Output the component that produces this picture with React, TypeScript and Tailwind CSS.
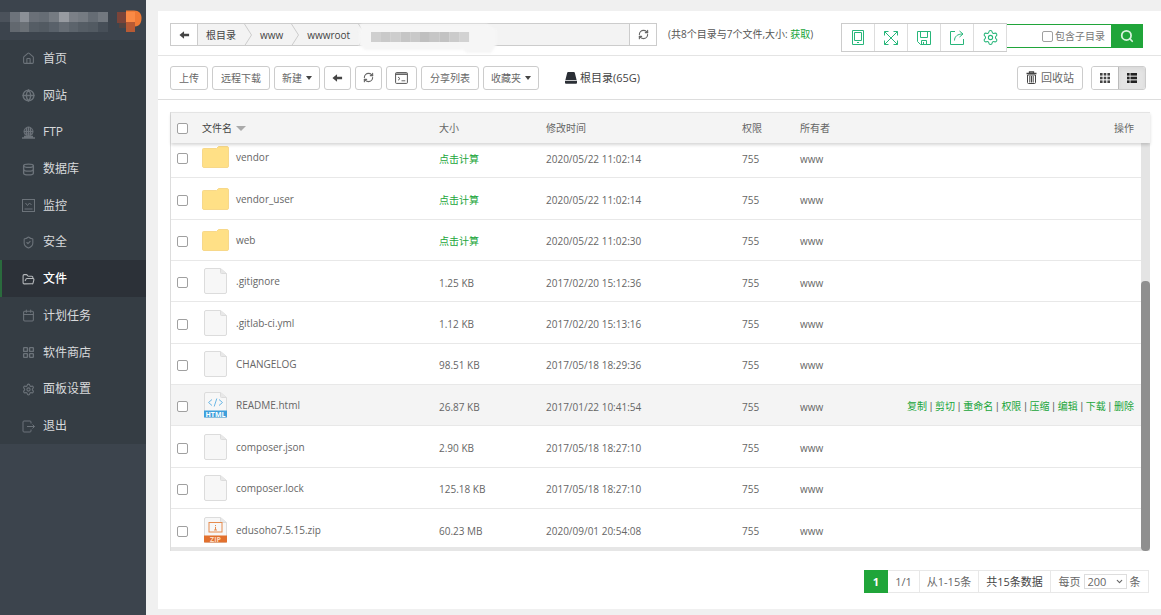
import type { ReactNode } from 'react';
import {
  Calendar,
  ChevronDown,
  Database,
  FolderOpen,
  Globe,
  House,
  LayoutGrid,
  RefreshCw,
  Search,
  Settings,
  ShieldCheck,
} from 'lucide-react';

type FileKind = 'folder' | 'file' | 'html' | 'zip';

interface FileRow {
  name: string;
  kind: FileKind;
  size: string | null;
  mtime: string;
  active?: boolean;
}

const files: FileRow[] = [
  { name: 'vendor', kind: 'folder', size: null, mtime: '2020/05/22 11:02:14' },
  { name: 'vendor_user', kind: 'folder', size: null, mtime: '2020/05/22 11:02:14' },
  { name: 'web', kind: 'folder', size: null, mtime: '2020/05/22 11:02:30' },
  { name: '.gitignore', kind: 'file', size: '1.25 KB', mtime: '2017/02/20 15:12:36' },
  { name: '.gitlab-ci.yml', kind: 'file', size: '1.12 KB', mtime: '2017/02/20 15:13:16' },
  { name: 'CHANGELOG', kind: 'file', size: '98.51 KB', mtime: '2017/05/18 18:29:36' },
  { name: 'README.html', kind: 'html', size: '26.87 KB', mtime: '2017/01/22 10:41:54', active: true },
  { name: 'composer.json', kind: 'file', size: '2.90 KB', mtime: '2017/05/18 18:27:10' },
  { name: 'composer.lock', kind: 'file', size: '125.18 KB', mtime: '2017/05/18 18:27:10' },
  { name: 'edusoho7.5.15.zip', kind: 'zip', size: '60.23 MB', mtime: '2020/09/01 20:54:08' },
];

const actions = ['复制', '剪切', '重命名', '权限', '压缩', '编辑', '下载', '删除'];

const iconClass = 'h-[13px] w-[13px]';

const menu: { label: string; icon: ReactNode; active?: boolean }[] = [
  { label: '首页', icon: <House className={iconClass} strokeWidth={2} /> },
  { label: '网站', icon: <Globe className={iconClass} strokeWidth={2.5} /> },
  { label: 'FTP', icon: <FtpIcon /> },
  { label: '数据库', icon: <Database className={iconClass} strokeWidth={2.5} /> },
  { label: '监控', icon: <MonitorIcon /> },
  { label: '安全', icon: <ShieldCheck className={iconClass} strokeWidth={2} /> },
  { label: '文件', icon: <FolderOpen className={iconClass} strokeWidth={2} />, active: true },
  { label: '计划任务', icon: <Calendar className={iconClass} strokeWidth={2} /> },
  { label: '软件商店', icon: <LayoutGrid className={iconClass} strokeWidth={2.5} /> },
  { label: '面板设置', icon: <Settings className={iconClass} strokeWidth={2} /> },
  { label: '退出', icon: <ExitIcon /> },
];

function FtpIcon() {
  return (
    <svg viewBox="0 0 13 13" className={iconClass} fill="none" stroke="currentColor">
      <circle cx="6.5" cy="5.5" r="4.5" fill="currentColor" fillOpacity=".35" />
      <path d="M2 5.5h9M6.5 1v9M4.5 2v7M8.5 2v7M2.5 8h8" />
      <path d="M0 12h13M2 10.5h9" strokeWidth="1.4" />
    </svg>
  );
}

function MonitorIcon() {
  return (
    <svg viewBox="0 0 13 13" className={iconClass} fill="none" stroke="currentColor">
      <rect x=".5" y=".5" width="12" height="12" />
      <path d="M2.5 10h8M3.5 4l2 2.5 2-2.5 2 2" />
    </svg>
  );
}

function ExitIcon() {
  return (
    <svg viewBox="0 0 13 13" className={iconClass} fill="none" stroke="currentColor">
      <path d="M9 3.5V2a1 1 0 0 0-1-1H2a1 1 0 0 0-1 1v9a1 1 0 0 0 1 1h6a1 1 0 0 0 1-1V9.500M5 6.500h7.500M10.500 4.500l2 2-2 2" />
    </svg>
  );
}

function BackArrow() {
  return (
    <svg viewBox="0 0 12 10" className="h-[10px] w-[11px]" fill="#444">
      <path d="M.5 5 5.500 1v2.600H11v2.800H5.500V9z" />
    </svg>
  );
}

function TerminalIcon() {
  return (
    <svg viewBox="0 0 13 12" className="h-3 w-[13px]" fill="none" stroke="#555">
      <rect x=".6" y=".6" width="11.8" height="10.8" rx=".8" />
      <path d="M.6 2.2h11.8" strokeWidth="1.4" />
      <path d="m3 5 2 1.6L3 8.3M6.5 8.8h3.8" strokeWidth=".9" />
    </svg>
  );
}

function DiskIcon() {
  return (
    <svg viewBox="0 0 12 12" className="h-3 w-3" fill="#2b2f36">
      <path d="M3.2 0h5.6a1 1 0 0 1 1 .8L11.6 8H.4L2.2.8a1 1 0 0 1 1-.8z" />
      <path d="M0 8.8h12v2a1 1 0 0 1-1 1H1a1 1 0 0 1-1-1z" />
    </svg>
  );
}

function TrashIcon() {
  return (
    <svg viewBox="0 0 11 13" className="h-[13px] w-[11px]" fill="none" stroke="#444">
      <path d="M.5 2.500h10M3.500 2V.8h4V2" strokeWidth="1.3" />
      <path d="M1.500 4h8v7.500a1 1 0 0 1-1 1h-6a1 1 0 0 1-1-1zM3.800 5v6.500M5.500 5v6.500M7.200 5v6.500" />
    </svg>
  );
}

function Caret() {
  return <span className="ml-1 border-x-[3px] border-t-[4px] border-x-transparent border-t-[#444]" />;
}

function GridIcon() {
  return (
    <svg viewBox="0 0 10 10" className="h-[10px] w-[10px]" fill="#444">
      {[0, 3.7, 7.4].map((y) =>
        [0, 3.7, 7.4].map((x) => <rect key={`${x}-${y}`} x={x} y={y} width="2.6" height="2.6" />)
      )}
    </svg>
  );
}

function ListIcon() {
  return (
    <svg viewBox="0 0 10 10" className="h-[10px] w-[10px]" fill="#222">
      {[0, 3.7, 7.4].map((y) => (
        <g key={y}>
          <rect x="0" y={y} width="2.6" height="2.6" />
          <rect x="3.5" y={y} width="6.5" height="2.6" />
        </g>
      ))}
    </svg>
  );
}

function FileIcon({ kind }: { kind: FileKind }) {
  if (kind === 'folder') {
    return (
      <svg viewBox="0 0 27 22" className="h-[22px] w-[27px]">
        <path
          d="M1.5 2.5h13l2-2h8.5a1.5 1.5 0 0 1 1.5 1.5v18a1.5 1.5 0 0 1-1.5 1.5H2A1.5 1.5 0 0 1 .5 20V3.5a1 1 0 0 1 1-1z"
          fill="#ffe086"
          stroke="#f7d88a"
        />
      </svg>
    );
  }
  return (
    <svg viewBox="0 0 23 26" className="mx-[2px] h-[26px] w-[23px]">
      <path
        d="M2 .5h14.5l6 5V24a1.5 1.5 0 0 1-1.5 1.5H2A1.5 1.5 0 0 1 .5 24V2A1.5 1.5 0 0 1 2 .5z"
        fill="#f7f7f7"
        stroke="#dcdcdc"
      />
      <path d="M16.5.5v4a1 1 0 0 0 1 1h5" fill="#e8e8e8" stroke="#dcdcdc" />
      {kind === 'html' && (
        <>
          <path d="m8 7.5-3.5 3L8 13.5M15 7.5l3.5 3-3.5 3M12.8 6.5l-2.6 8" fill="none" stroke="#6bb8e6" />
          <rect x="0" y="18.5" width="23" height="7" fill="#3d9fdb" />
          <text x="11.5" y="24.8" textAnchor="middle" fontSize="7" fontWeight="700" fill="#fff">HTML</text>
        </>
      )}
      {kind === 'zip' && (
        <>
          <rect x="5" y="5.5" width="13" height="9.5" fill="none" stroke="#e58b4e" />
          <path d="M11.5 8v1.2M11.5 10v3M10 13h3" fill="none" stroke="#e58b4e" />
          <rect x="0" y="18.5" width="23" height="7" fill="#e2702d" />
          <text x="11.5" y="24.8" textAnchor="middle" fontSize="7" fontWeight="700" fill="#fbd9c0">ZIP</text>
        </>
      )}
    </svg>
  );
}

function Checkbox({ label }: { label: string }) {
  return (
    <input
      type="checkbox"
      aria-label={label}
      className="block h-[11px] w-[11px] appearance-none rounded-[2px] border border-[#a0a0a0] bg-white checked:bg-[#20a53a]"
    />
  );
}

function ToolButton({ children, label, className = 'px-2' }: { children: ReactNode; label?: string; className?: string }) {
  return (
    <button
      aria-label={label}
      className={`flex h-6 items-center justify-center rounded-[3px] border border-[#ccc] bg-white text-[10px] text-[#666] ${className}`}
    >
      {children}
    </button>
  );
}

function Columns() {
  return (
    <colgroup>
      <col className="w-[31px]" />
      <col className="w-[237px]" />
      <col className="w-[107px]" />
      <col className="w-[196px]" />
      <col className="w-[58px]" />
      <col className="w-[60px]" />
      <col />
    </colgroup>
  );
}

function Logo() {
  const top = ['#4b525b', '#6d737b', '#8b9097', '#6a7078', '#666d75', '#757b82', '#979ba1', '#7b8087', '#757b82', '#656c74', '#72787f'];
  const bottom = ['#3c444d', '#62686f', '#6a7076', '#555d65', '#525a62', '#59616a', '#656c74', '#5c646c', '#555d65', '#525a62', '#474f58'];
  return (
    <svg viewBox="0 0 146 40" className="h-10 w-[146px]" shapeRendering="crispEdges">
      {top.map((c, i) => (
        <rect key={i} x={i * 9.8} y="12" width="9.8" height="10" fill={c} />
      ))}
      {bottom.map((c, i) => (
        <rect key={i} x={i * 9.8} y="22" width="9.8" height="10" fill={c} />
      ))}
      <path d="M126 10.5h8c5 0 7.5 3 7.5 7.5s-2 8.5-6.5 8.5h-9z" fill="#f07a35" shapeRendering="auto" />
      <rect x="117" y="12" width="9" height="11" fill="#7b4439" />
      <rect x="119" y="23" width="7" height="5" fill="#54433f" />
      <rect x="126" y="12" width="9" height="10" fill="#fb8a45" />
      <rect x="126" y="22" width="9" height="10" fill="#b75a34" />
    </svg>
  );
}

function Sidebar() {
  return (
    <aside className="w-[146px] shrink-0 bg-[#3c444d]">
      <Logo />
      <nav className="grid h-[404px] auto-rows-fr bg-[#353d44]">
        {menu.map((item) => (
          <a
            key={item.label}
            href="#"
            className={`flex items-center gap-2 border-l-2 pt-px pl-5 text-[12px] ${
              item.active
                ? 'border-[#2a6b3d] bg-[#2c3138] font-medium text-white'
                : 'border-transparent text-[#d8dadc]'
            }`}
          >
            <span className={item.active ? 'text-[#b5b8bb]' : 'text-[#6c737a]'}>{item.icon}</span>
            {item.label}
          </a>
        ))}
      </nav>
    </aside>
  );
}

function Crumb({ children }: { children: ReactNode }) {
  return (
    <>
      <a href="#" className="px-2 text-[#444]">{children}</a>
      <svg viewBox="0 0 8 22" className="h-[22px] w-2" fill="none" stroke="#ccc">
        <path d="m.5 0 7 11-7 11" />
      </svg>
    </>
  );
}

function PathBar() {
  return (
    <div className="relative flex h-[23px] w-[487px] border border-[#ccc] bg-[#f3f3f3] text-[10px]">
      <button aria-label="返回" className="flex w-[27px] items-center justify-center border-r border-[#ccc] bg-white">
        <BackArrow />
      </button>
      <div className="flex flex-1 items-center">
        <Crumb>根目录</Crumb>
        <Crumb>www</Crumb>
        <Crumb>wwwroot</Crumb>
      </div>
      <button aria-label="刷新" className="flex w-[27px] items-center justify-center border-l border-[#ccc] bg-white">
        <RefreshCw className="h-[11px] w-[11px] text-[#666]" strokeWidth={2.5} />
      </button>
      {/* redacted directory name */}
      <svg viewBox="0 0 142 36" className="absolute -top-1 left-[186px] h-9 w-[142px]">
        <path d="M4 4h126l10 6v14l-6 9h-24l-4-3H8l-6-5V15z" fill="#f6f6f6" className="blur-[1px]" />
        {['#cfcfcf', '#c9c9c9', '#cdcdcd', '#c5c5c5', '#c9c9c9', '#bfbfbf', '#c6c6c6', '#c2c2c2', '#cbcbcb', '#d2d2d2'].map((c, i) => (
          <rect key={i} x={14 + i * 9.8} y="12" width="9.9" height="10" fill={c} />
        ))}
      </svg>
    </div>
  );
}

function CaptureTools() {
  const cell = 'flex w-[33px] items-center justify-center border-r border-[#ddd]';
  const svg = 'h-4 w-4';
  return (
    <div className="flex h-[29px] border border-r-0 border-[#ccc] bg-white">
      <button aria-label="设备" className={cell}>
        <svg viewBox="0 0 16 16" className={svg} fill="none" stroke="#27b67a">
          <path d="M2.5.5h11v14h-11zM4.5 2.500h7v8h-7zM7 12.500h2" />
        </svg>
      </button>
      <button aria-label="全屏" className={cell}>
        <svg viewBox="0 0 16 16" className={svg} fill="none" stroke="#27b67a">
          <path d="m1.5 1.5 13 13M14.5 1.5l-13 13M1.5 5.5v-4h4M10.5 1.5h4v4M14.5 10.5v4h-4M5.5 14.5h-4v-4" />
        </svg>
      </button>
      <button aria-label="保存" className={cell}>
        <svg viewBox="0 0 16 16" className={svg} fill="none" stroke="#27b67a">
          <path d="M1.5 1.5h13v13H4.500l-3-3zM4.500 1.500v6h7v-6M5.500 14.500v-4h5v4M7.500 12v2.500" />
        </svg>
      </button>
      <button aria-label="分享" className={cell}>
        <svg viewBox="0 0 16 16" className={svg} fill="none" stroke="#27b67a">
          <path d="M6 1.5H1.5v13h13V9M5.500 10.500c0-4 3-6.500 8-6.500M10.500 1l3.500 3-3.500 3" />
        </svg>
      </button>
      <button aria-label="设置" className={cell}>
        <Settings className="h-[17px] w-[17px] text-[#27b67a]" strokeWidth={1.5} />
      </button>
    </div>
  );
}

function FileTable() {
  return (
    <div className="mt-3 mr-[11px] mb-[19px] ml-3 border-l border-[#ddd] text-[10px] text-[#666]">
      <div className="relative z-10 border-t border-[#e4e4e4] bg-[#f4f4f4] pr-[9px] shadow-[0_2px_3px_rgba(0,0,0,0.16)]">
        <table className="w-full table-fixed">
          <Columns />
          <thead>
            <tr className="h-[30px] text-left text-[#666] [&>th]:font-normal">
              <th className="pl-[6px]"><Checkbox label="全选" /></th>
              <th>
                <span className="flex items-center gap-1 text-[#444]">
                  文件名
                  <span className="border-x-[5px] border-t-[5px] border-x-transparent border-t-[#aaa]" />
                </span>
              </th>
              <th>大小</th>
              <th>修改时间</th>
              <th>权限</th>
              <th>所有者</th>
              <th className="pr-[7px] text-right">操作</th>
            </tr>
          </thead>
        </table>
      </div>
      <div className="flex h-[404px] overflow-hidden">
        <div className="min-w-0 flex-1">
          <table className="-mt-[7px] h-[414px] w-full table-fixed">
            <Columns />
            <tbody>
              {files.map((file) => (
                <tr key={file.name} className={`h-[41px] border-t border-[#e8e8e8] ${file.active ? 'bg-[#f4f4f4]' : ''}`}>
                  <td className="pt-[3px] pl-[6px]"><Checkbox label={file.name} /></td>
                  <td>
                    <span className="flex h-[26px] items-center gap-[7px]">
                      <FileIcon kind={file.kind} />
                      {file.name}
                    </span>
                  </td>
                  <td className="pt-[3px]">{file.size ?? <a href="#" className="text-[#20a53a]">点击计算</a>}</td>
                  <td className="pt-[3px]">{file.mtime}</td>
                  <td className="pt-[3px]">755</td>
                  <td className="pt-[3px]">www</td>
                  <td className="pt-[3px] pr-[7px] text-right font-['Liberation_Sans','Noto_Sans_CJK_SC',sans-serif] whitespace-nowrap">
                    {file.active &&
                      actions.map((action, i) => (
                        <span key={action}>
                          {i > 0 && ' | '}
                          <a href="#" className="text-[#20a53a]">{action}</a>
                        </span>
                      ))}
                  </td>
                </tr>
              ))}
            </tbody>
          </table>
        </div>
        <div className="flex w-[9px] flex-col justify-end bg-[#e4e4e4]">
          <div className="h-[266px] rounded-t-[4px] bg-[#8f8f8f]" />
        </div>
      </div>
      <div className="flex h-[4px] justify-end bg-[#e6e6e6]">
        <div className="w-[9px] rounded-b-[4px] bg-[#8f8f8f]" />
      </div>
    </div>
  );
}

function Pagination() {
  return (
    <div className="mx-3 flex justify-end text-[11px] text-[#666]">
      <span className="flex h-[23px] w-6 items-center justify-center bg-[#20a53a] font-bold text-white">1</span>
      <div className="flex h-[23px] divide-x divide-[#e8e8e8] border border-l-0 border-[#e8e8e8]">
        <span className="flex w-8 items-center justify-center">1/1</span>
        <span className="flex w-[59px] items-center justify-center">从1-15条</span>
        <span className="flex w-[72px] items-center justify-center text-[#444]">共15条数据</span>
        <label className="flex w-[97px] items-center justify-center gap-[3px]">
          每页
          <span className="relative flex items-center">
            <select className="h-[15px] w-[43px] appearance-none border border-[#ddd] bg-white pl-[3px] text-[11px] leading-none">
              <option>200</option>
            </select>
            <ChevronDown className="pointer-events-none absolute right-[3px] h-[9px] w-[9px]" strokeWidth={3} />
          </span>
          条
        </label>
      </div>
    </div>
  );
}

export default function App() {
  return (
    <div
      lang="zh-CN"
      className="flex min-h-screen bg-[#f0f0f0] font-['Open_Sans','Noto_Sans_CJK_SC',sans-serif] leading-none"
    >
      <Sidebar />
      <main className="mt-[11px] mb-[6px] ml-3 min-w-0 flex-1 bg-white">
        <div className="flex h-[45px] items-start border-b border-[#e4e4e4] pt-3 pr-[18px] pl-3">
          <PathBar />
          <p className="ml-[11px] flex h-[21px] items-center text-[10px] whitespace-nowrap text-[#555]">
            (共8个目录与7个文件,大小:&nbsp;<a href="#" className="text-[#20a53a]">获取</a>)
          </p>
          <div className="ml-auto flex items-start">
            <CaptureTools />
            <form className="mt-px flex h-6 border-y border-[#20a53a]">
              <input aria-label="搜索文件" className="w-[35px] outline-none" />
              <label className="flex w-[69px] items-center gap-[2px] text-[10px] text-[#777]">
                <Checkbox label="包含子目录" />
                包含子目录
              </label>
              <button type="button" aria-label="搜索" className="flex w-8 items-center justify-center bg-[#20a53a]">
                <Search className="h-[14px] w-[14px] text-[#d9f3de]" strokeWidth={3} />
              </button>
            </form>
          </div>
        </div>

        <div className="flex h-11 items-center gap-1 border-b border-[#ddd] pr-[15px] pl-3">
          <ToolButton>上传</ToolButton>
          <ToolButton>远程下载</ToolButton>
          <ToolButton className="px-[7px]">新建<Caret /></ToolButton>
          <ToolButton label="后退" className="px-[7px]"><BackArrow /></ToolButton>
          <ToolButton label="刷新列表" className="px-[7px]">
            <RefreshCw className="h-[11px] w-[11px]" strokeWidth={2.5} />
          </ToolButton>
          <ToolButton label="终端"><TerminalIcon /></ToolButton>
          <ToolButton>分享列表</ToolButton>
          <ToolButton className="px-[7px]">收藏夹<Caret /></ToolButton>
          <span className="ml-[22px] flex items-center gap-[3px] text-[11px] text-[#444]">
            <DiskIcon />
            根目录(65G)
          </span>
          <ToolButton className="ml-auto gap-1 px-2 text-[#444]">
            <TrashIcon />
            <span className="text-[11px]">回收站</span>
          </ToolButton>
          <div className="ml-1 flex overflow-hidden rounded-[3px] border border-[#ccc]">
            <button aria-label="网格" className="flex h-[22px] w-[26px] items-center justify-center bg-white">
              <GridIcon />
            </button>
            <button aria-label="列表" className="flex h-[22px] w-[27px] items-center justify-center border-l border-[#bbb] bg-[#e4e4e4] shadow-inner">
              <ListIcon />
            </button>
          </div>
        </div>

        <FileTable />
        <Pagination />
      </main>
    </div>
  );
}
